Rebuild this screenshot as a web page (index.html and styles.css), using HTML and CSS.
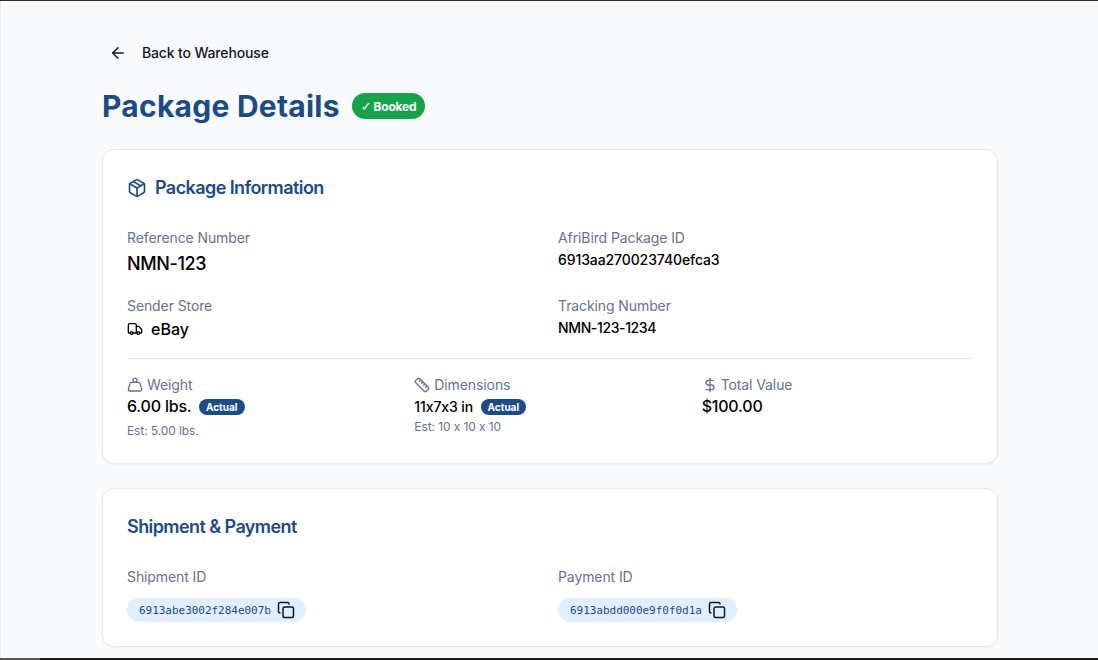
FILE: index.html
```html
<!DOCTYPE html>
<html lang="en">
<head>
<meta charset="utf-8">
<title>Package Details</title>
<link rel="stylesheet" href="styles.css">
</head>
<body>
<div class="frame">
  <main class="container">
    <a class="back">
      <svg class="icon-back" viewBox="0 0 24 24" fill="none" stroke="currentColor" stroke-width="2" stroke-linecap="round" stroke-linejoin="round"><path d="m12 19-7-7 7-7"/><path d="M19 12H5"/></svg>
      <span>Back to Warehouse</span>
    </a>
    <header class="page-head">
      <h1>Package Details</h1>
      <span class="status"><span class="status-check">✓</span>Booked</span>
    </header>
    <section class="card card-info">
      <h2 class="card-title">
        <svg class="icon-title" viewBox="0 0 24 24" fill="none" stroke="currentColor" stroke-width="2" stroke-linecap="round" stroke-linejoin="round"><path d="M11 21.73a2 2 0 0 0 2 0l7-4A2 2 0 0 0 21 16V8a2 2 0 0 0-1-1.73l-7-4a2 2 0 0 0-2 0l-7 4A2 2 0 0 0 3 8v8a2 2 0 0 0 1 1.73z"/><path d="M12 22V12"/><path d="m3.3 7 8.7 5 8.7-5"/><path d="m7.5 4.27 9 5.15"/></svg>
        Package Information
      </h2>
      <div class="two-col two-col-info">
        <div class="field">
          <div class="label">Reference Number</div>
          <div class="value-lg">NMN-123</div>
        </div>
        <div class="field">
          <div class="label">AfriBird Package ID</div>
          <div class="value-sm">6913aa270023740efca3</div>
        </div>
        <div class="field">
          <div class="label">Sender Store</div>
          <div class="value-store">
            <svg class="icon-truck" viewBox="0 0 24 24" fill="none" stroke="currentColor" stroke-width="2" stroke-linecap="round" stroke-linejoin="round"><path d="M14 18V6a2 2 0 0 0-2-2H4a2 2 0 0 0-2 2v11a1 1 0 0 0 1 1h2"/><path d="M15 18H9"/><path d="M19 18h2a1 1 0 0 0 1-1v-3.65a1 1 0 0 0-.22-.624l-3.48-4.35A1 1 0 0 0 17.52 8H14"/><circle cx="17" cy="18" r="2"/><circle cx="7" cy="18" r="2"/></svg>
            <span>eBay</span>
          </div>
        </div>
        <div class="field">
          <div class="label">Tracking Number</div>
          <div class="value-sm value-tight">NMN-123-1234</div>
        </div>
      </div>
      <div class="three-col">
        <div>
          <div class="label label-icon">
            <svg class="icon-label" viewBox="0 0 24 24" fill="none" stroke="currentColor" stroke-width="2" stroke-linecap="round" stroke-linejoin="round"><circle cx="12" cy="5" r="3"/><path d="M6.5 8a2 2 0 0 0-1.905 1.46L2.1 18.5A2 2 0 0 0 4 21h16a2 2 0 0 0 1.925-2.54L19.4 9.5A2 2 0 0 0 17.48 8Z"/></svg>
            Weight
          </div>
          <div class="metric"><span class="metric-lg">6.00 lbs.</span><span class="pill">Actual</span></div>
          <div class="est est-w">Est: 5.00 lbs.</div>
        </div>
        <div>
          <div class="label label-icon">
            <svg class="icon-label" viewBox="0 0 24 24" fill="none" stroke="currentColor" stroke-width="2" stroke-linecap="round" stroke-linejoin="round"><path d="M21.3 15.3a2.4 2.4 0 0 1 0 3.4l-2.6 2.6a2.4 2.4 0 0 1-3.4 0L2.7 8.7a2.41 2.41 0 0 1 0-3.4l2.6-2.6a2.41 2.41 0 0 1 3.4 0Z"/><path d="m14.5 12.5 2-2"/><path d="m11.5 9.5 2-2"/><path d="m8.5 6.5 2-2"/><path d="m17.5 15.5 2-2"/></svg>
            Dimensions
          </div>
          <div class="metric"><span class="metric-md">11x7x3 in</span><span class="pill">Actual</span></div>
          <div class="est">Est: 10 x 10 x 10</div>
        </div>
        <div>
          <div class="label label-icon label-gap">
            <svg class="icon-label" viewBox="0 0 24 24" fill="none" stroke="currentColor" stroke-width="2" stroke-linecap="round" stroke-linejoin="round"><line x1="12" x2="12" y1="2" y2="22"/><path d="M17 5H9.5a3.5 3.5 0 0 0 0 7h5a3.5 3.5 0 0 1 0 7H6"/></svg>
            Total Value
          </div>
          <div class="metric"><span class="metric-lg">$100.00</span></div>
        </div>
      </div>
    </section>
    <section class="card card-ship">
      <h2 class="card-title">Shipment &amp; Payment</h2>
      <div class="two-col">
        <div>
          <div class="label">Shipment ID</div>
          <div class="chip">
            <code>6913abe3002f284e007b</code>
            <svg class="icon-copy" viewBox="0 0 24 24" fill="none" stroke="currentColor" stroke-width="2" stroke-linecap="round" stroke-linejoin="round"><rect width="14" height="14" x="8" y="8" rx="2" ry="2"/><path d="M4 16c-1.1 0-2-.9-2-2V4c0-1.1.9-2 2-2h10c1.1 0 2 .9 2 2"/></svg>
          </div>
        </div>
        <div>
          <div class="label">Payment ID</div>
          <div class="chip">
            <code>6913abdd000e9f0f0d1a</code>
            <svg class="icon-copy" viewBox="0 0 24 24" fill="none" stroke="currentColor" stroke-width="2" stroke-linecap="round" stroke-linejoin="round"><rect width="14" height="14" x="8" y="8" rx="2" ry="2"/><path d="M4 16c-1.1 0-2-.9-2-2V4c0-1.1.9-2 2-2h10c1.1 0 2 .9 2 2"/></svg>
          </div>
        </div>
      </div>
    </section>
  </main>
  <div class="edge"></div>
</div>
</body>
</html>
```
FILE: styles.css
```css
* { box-sizing: border-box; }
html, body { margin: 0; height: 100%; overflow: hidden; }
body {
  font-family: Inter, "Liberation Sans", sans-serif;
  color: #0b0f19;
  background: #f8fafc;
}
.frame {
  display: flex;
  flex-direction: column;
  height: 660px;
  border-top: 1px solid #2a2a2a;
  background: #f8fafc;
  overflow: hidden;
}
.container {
  flex: 1;
  min-height: 0;
  padding: 34px 0 0 101px;
  border-left: 1px solid #e8eaee;
  overflow: hidden;
}
.edge {
  flex: none;
  height: 2px;
  background: linear-gradient(90deg, #555 40px, #1c1c1c 40px);
}
.back {
  display: flex;
  align-items: center;
  gap: 15px;
  height: 35px;
  padding-left: 7px;
  font-size: 14px;
  font-weight: 450;
  letter-spacing: -0.15px;
  color: #111827;
}
.icon-back { width: 18px; height: 18px; }
.page-head {
  display: flex;
  align-items: center;
  gap: 12px;
  margin-top: 18px;
  height: 36px;
}
h1 {
  margin: 0;
  font-size: 30px;
  line-height: 36px;
  font-weight: 700;
  letter-spacing: 0.25px;
  color: #1b4b8a;
}
.status {
  display: inline-flex;
  align-items: center;
  gap: 2px;
  height: 26px;
  padding: 0 9px;
  border-radius: 13px;
  background: #16a34a;
  color: #fff;
  font-size: 12px;
  font-weight: 700;
  letter-spacing: -0.2px;
}
.status-check { font-family: "DejaVu Sans", sans-serif; font-size: 13px; }
.card {
  width: 896px;
  background: #fff;
  border: 1px solid #e5e7eb;
  border-radius: 12px;
  box-shadow: 0 1px 2px rgba(0, 0, 0, 0.05);
  padding: 24px;
}
.card-info { margin-top: 25px; height: 315px; }
.card-ship { margin-top: 24px; height: 159px; }
.card-title {
  display: flex;
  align-items: center;
  gap: 8px;
  margin: 0 0 27px;
  height: 27px;
  font-size: 18px;
  font-weight: 600;
  letter-spacing: -0.58px;
  color: #1b4b8a;
}
.icon-title { width: 20px; height: 20px; }
.two-col {
  display: grid;
  grid-template-columns: 1fr 1fr;
  column-gap: 16px;
  row-gap: 16px;
}
.two-col-info { margin-bottom: 10px; }
.field { height: 52px; }
.label {
  font-size: 14px;
  line-height: 20px;
  color: #64748b;
  letter-spacing: -0.1px;
}
.label-icon { display: flex; align-items: center; gap: 4px; }
.label-gap { gap: 3px; }
.icon-label { width: 16px; height: 16px; }
.value-lg { margin-top: 2px; font-size: 18px; line-height: 28px; font-weight: 450; letter-spacing: -0.4px; color: #000; }
.value-sm { font-size: 14px; line-height: 24px; font-weight: 450; letter-spacing: -0.1px; color: #000; }
.value-tight { letter-spacing: -0.37px; }
.value-store {
  display: flex;
  align-items: center;
  gap: 8px;
  height: 24px;
  margin-top: 1px;
  font-size: 16px;
  font-weight: 450;
  color: #000;
}
.icon-truck { width: 16px; height: 16px; }
.three-col {
  display: grid;
  grid-template-columns: repeat(3, 1fr);
  column-gap: 16px;
  padding-top: 16px;
  border-top: 1px solid #e5e7eb;
}
.metric { display: flex; align-items: center; gap: 7.5px; height: 24px; color: #000; }
.metric-lg { margin-top: -2px; font-size: 16px; font-weight: 450; letter-spacing: -0.2px; }
.metric-md { margin-top: -2px; font-size: 14px; font-weight: 450; letter-spacing: -0.1px; }
.pill {
  display: inline-flex;
  align-items: center;
  height: 16px;
  padding: 0 7px;
  border-radius: 8px;
  background: #1b4b8a;
  color: #fff;
  font-size: 10px;
  font-weight: 700;
}
.est { margin-top: 0; font-size: 12px; line-height: 16px; color: #64748b; letter-spacing: -0.1px; }
.est-w { margin-top: 4px; }
.chip {
  display: inline-flex;
  align-items: center;
  gap: 6px;
  height: 24px;
  margin-top: 11px;
  padding: 0 11px 0 12px;
  border-radius: 12px;
  background: #e0effe;
  color: #1b4b8a;
}
.chip code { font-family: "DejaVu Sans Mono", monospace; font-size: 11px; letter-spacing: -0.03px; }
.icon-copy { width: 18px; height: 18px; color: #0f172a; }
```
